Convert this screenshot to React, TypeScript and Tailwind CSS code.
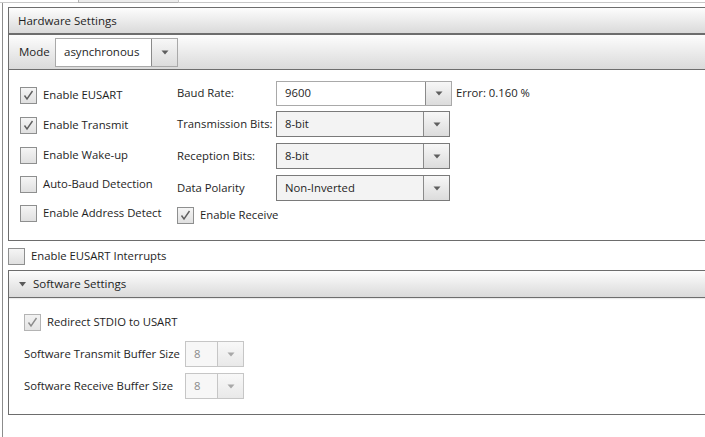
import React from "react";

function Arrow({ light }: { light?: boolean }) {
  return (
    <svg width="8" height="5" viewBox="0 0 8 5">
      <path d="M0.5 0.5h7L4 4.5z" fill={light ? "#a8a8a8" : "#5e5e5e"} />
    </svg>
  );
}

function Check({ checked, disabled }: { checked?: boolean; disabled?: boolean }) {
  return (
    <span
      className={
        "flex h-[17px] w-[17px] shrink-0 items-center justify-center border bg-linear-to-b " +
        (disabled
          ? "border-[#b4b4b4] from-[#f2f2f2] to-[#e4e4e4]"
          : "border-[#8e8f8f] from-[#f5f5f5] to-[#e0e0e0]")
      }
    >
      {checked && (
        <svg width="13" height="13" viewBox="0 0 13 13">
          <polyline
            points="2.5,6.5 5,10 10.5,2"
            fill="none"
            stroke={disabled ? "#8c8c8c" : "#5f5f5f"}
            strokeWidth="1.4"
          />
        </svg>
      )}
    </span>
  );
}

function CheckRow({ label, checked, disabled, className = "" }: { label: string; checked?: boolean; disabled?: boolean; className?: string }) {
  return (
    <div className={"flex h-[17px] items-center gap-[6px] " + className}>
      <Check checked={checked} disabled={disabled} />
      <span className="whitespace-nowrap">{label}</span>
    </div>
  );
}

function Select({
  value,
  className,
  white,
  disabled,
}: {
  value: string;
  className: string;
  white?: boolean;
  disabled?: boolean;
}) {
  const border = disabled ? "border-[#c6c6c6]" : white ? "border-[#a9a9a9]" : "border-[#7a7a7a]";
  return (
    <div className={"flex border " + border + " " + className}>
      <div
        className={
          "flex flex-1 items-center pl-[8px] " +
          (disabled ? "bg-[#f7f7f7] text-[#8a8a8a]" : white ? "bg-white" : "bg-[#f3f3f3]")
        }
      >
        {value}
      </div>
      <div
        className={
          "flex w-[26px] items-center justify-center border-l bg-linear-to-b " +
          (disabled ? "border-[#c6c6c6] from-[#f8f8f8] to-[#e9e9e9]" : "border-[#8a8a8a] from-[#f7f7f7] to-[#dcdcdc]")
        }
      >
        <Arrow light={disabled} />
      </div>
    </div>
  );
}

export default function App() {
  return (
    <div className="flex h-[437px] w-[705px] flex-col overflow-hidden bg-white font-['Open_Sans',sans-serif] text-[11.3px] text-[#1e1e1e]">
      <div className="flex h-[3px] shrink-0">
        <div className="w-[78px] border-b border-[#c8c8c8] bg-white" />
        <div className="w-[100px] border-b border-l border-[#b4b4b4] bg-[#ececec]" />
        <div className="flex-1 border-b border-l border-[#c8c8c8] bg-white" />
      </div>
      <div className="ml-[2px] flex-1 border-l border-[#8c8c8c] pl-[5px] pt-[4px]">
        {/* Hardware settings */}
        <div className="w-[720px] border-l border-t border-[#6d6d6d]">
          <div className="flex h-[27px] items-center border-b-2 border-[#6d6d6d] bg-linear-to-b from-[#fdfdfd] to-[#dadada] pl-[9px] text-[11.5px]">
            Hardware Settings
          </div>
          <div className="flex h-[35px] items-center border-b border-[#6d6d6d] bg-linear-to-b from-[#fdfdfd] to-[#dadada] pl-[10px] text-[11.5px]">
            <span className="w-[36px]">Mode</span>
            <Select value="asynchronous" white className="h-[29px] w-[123px]" />
          </div>
          <div className="flex h-[171px] border-b border-[#6d6d6d]">
            <div className="flex w-[168px] flex-col pl-[11px] pt-[17px]">
              <CheckRow label="Enable EUSART" checked />
              <CheckRow label="Enable Transmit" checked className="mt-[13px]" />
              <CheckRow label="Enable Wake-up" className="mt-[13px]" />
              <CheckRow label="Auto-Baud Detection" className="mt-[12px]" />
              <CheckRow label="Enable Address Detect" className="mt-[12px]" />
            </div>
            <div className="flex flex-col pt-[11px]">
              <div className="flex h-[25px] items-center">
                <span className="w-[99px]">Baud Rate:</span>
                <Select value="9600" white className="h-[25px] w-[176px]" />
                <span className="ml-[4px]">Error: 0.160 %</span>
              </div>
              <div className="mt-[5px] flex h-[26px] items-center">
                <span className="w-[99px]">Transmission Bits:</span>
                <Select value="8-bit" className="h-[26px] w-[174px]" />
              </div>
              <div className="mt-[6px] flex h-[26px] items-center">
                <span className="w-[99px]">Reception Bits:</span>
                <Select value="8-bit" className="h-[26px] w-[174px]" />
              </div>
              <div className="mt-[6px] flex h-[26px] items-center">
                <span className="w-[99px]">Data Polarity</span>
                <Select value="Non-Inverted" className="h-[26px] w-[174px]" />
              </div>
              <CheckRow label="Enable Receive" checked className="mt-[6px]" />
            </div>
          </div>
        </div>

        <div className="mt-[6px] flex h-[18px] items-center gap-[6px]">
          <Check />
          <span>Enable EUSART Interrupts</span>
        </div>

        {/* Software settings */}
        <div className="mt-[5px] w-[720px] border-l border-t border-[#6d6d6d]">
          <div className="flex h-[27px] items-center border-b border-[#6d6d6d] bg-linear-to-b from-[#fdfdfd] to-[#dadada] pl-[10px] text-[11.5px] shadow-[0_1px_1px_rgba(0,0,0,0.08)]">
            <svg width="7" height="5" viewBox="0 0 7 5" className="mr-[7px]">
              <path d="M0 0h7L3.5 4.5z" fill="#5a5a5a" />
            </svg>
            Software Settings
          </div>
          <div className="flex h-[117px] flex-col border-b border-[#6d6d6d] pl-[15px] pt-[15px]">
            <CheckRow label="Redirect STDIO to USART" checked disabled className="h-[18px]" />
            <div className="mt-[10px] flex h-[26px] items-center">
              <span className="w-[161px]">Software Transmit Buffer Size</span>
              <Select value="8" disabled className="h-[26px] w-[59px]" />
            </div>
            <div className="mt-[6px] flex h-[26px] items-center">
              <span className="w-[161px]">Software Receive Buffer Size</span>
              <Select value="8" disabled className="h-[26px] w-[59px]" />
            </div>
          </div>
        </div>
      </div>
    </div>
  );
}
